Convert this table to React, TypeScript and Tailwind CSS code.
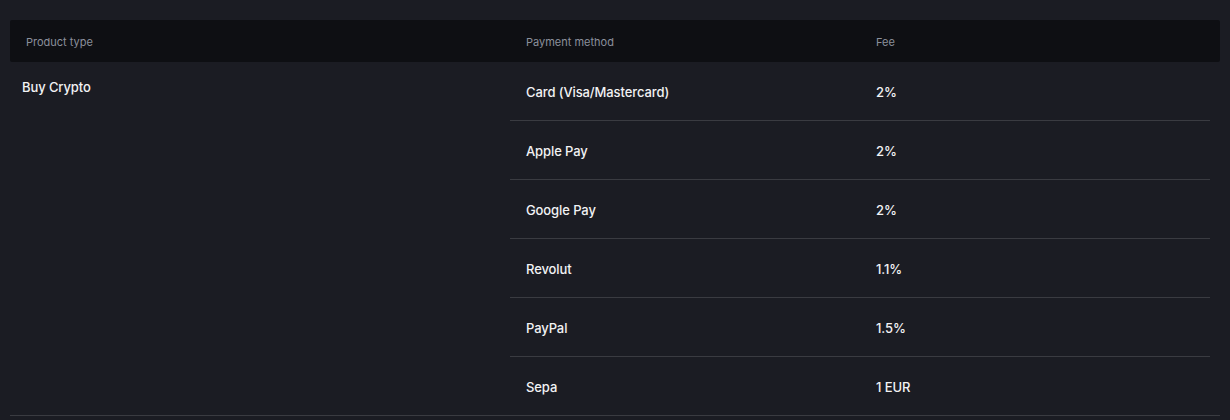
const rows = [
  { method: "Card (Visa/Mastercard)", fee: "2%" },
  { method: "Apple Pay", fee: "2%" },
  { method: "Google Pay", fee: "2%" },
  { method: "Revolut", fee: "1.1%" },
  { method: "PayPal", fee: "1.5%" },
  { method: "Sepa", fee: "1 EUR" },
];

export default function App() {
  return (
    <div
      className="h-[420px] w-[1230px] bg-[#1b1c23] px-[10px] pt-5"
      style={{ fontFamily: "Inter, 'Open Sans', sans-serif" }}
    >
      <div className="grid h-[42px] grid-cols-[500px_350px_350px] items-center rounded-[2px] bg-[#0e0f13] pt-[2px] text-[11px] text-[#8b909c]">
        <span className="pl-4">Product type</span>
        <span className="pl-4">Payment method</span>
        <span className="pl-4">Fee</span>
      </div>
      <div className="grid grid-cols-[500px_700px] border-b border-[#3a3b41]">
        <div className="pl-3 pt-4 text-[13px] font-medium tracking-[-0.1px] text-[#f2f2f4]">
          Buy Crypto
        </div>
        <div className="flex flex-col">
          {rows.map((r, i) => (
            <div
              key={r.method}
              className={
                "grid grid-cols-[350px_350px] items-center pt-1 text-[13px] font-medium tracking-[-0.1px] text-[#f2f2f4] " +
                (i < rows.length - 1 ? "h-[59px] border-b border-[#3a3b41]" : "h-[58px]")
              }
            >
              <span className="pl-4">{r.method}</span>
              <span className="pl-4">{r.fee}</span>
            </div>
          ))}
        </div>
      </div>
    </div>
  );
}
